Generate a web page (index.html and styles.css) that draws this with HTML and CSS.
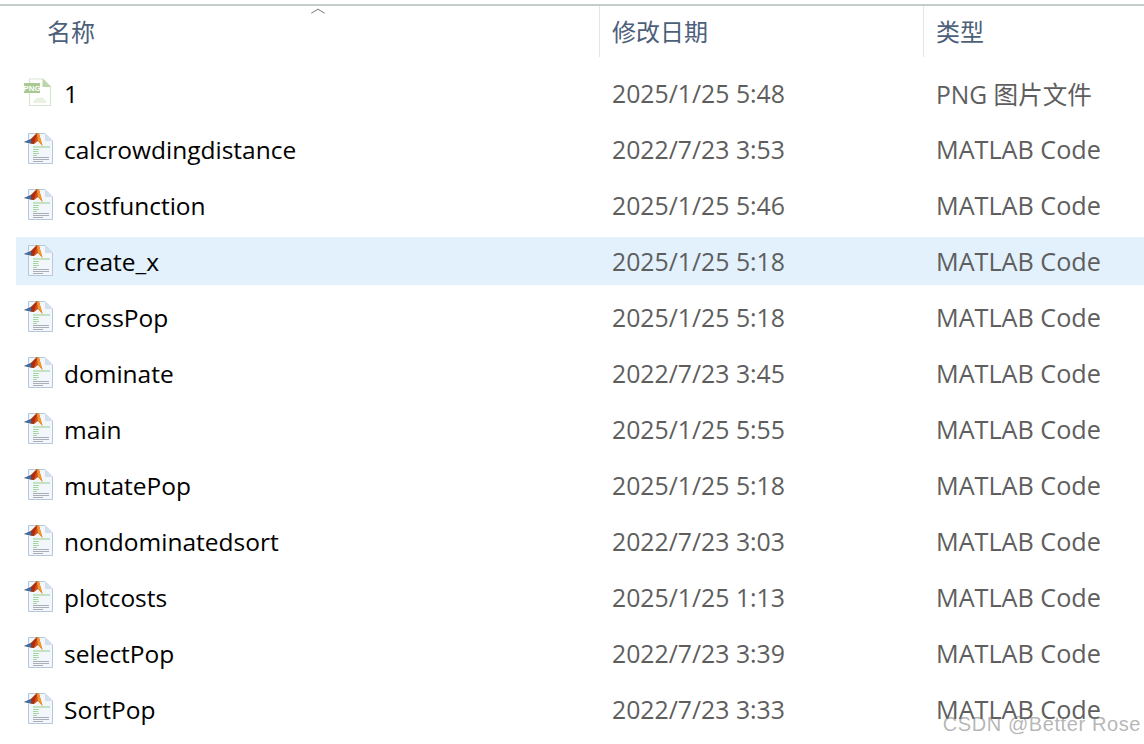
FILE: index.html
```html
<!DOCTYPE html>
<html lang="zh-CN">
<head>
    <meta charset="UTF-8">
    <meta name="viewport" content="width=device-width, initial-scale=1.0">
    <link rel="stylesheet" href="styles.css">
    <title>文件列表</title>
</head>
<body>
    <svg class="icon-defs" width="0" height="0">
        <symbol id="icon-matlab" viewBox="0 0 30 34">
            <path d="M4.500 1.500H21L28.500 9V31.500H4.500Z" fill="#f3f6fa" stroke="#b6c7da" stroke-width="1"/>
            <path d="M21 1.500V9H28.500Z" fill="#d3deec"/>
            <path d="M9 15H26" stroke="#8fd08c" stroke-width="1"/>
            <path d="M9 17.500H15M9 19.500H14M9 21.500H15M9 23.500H13" stroke="#a4d6a0" stroke-width="1"/>
            <path d="M9 25.500H25M9 27.500H25M9 29.500H19" stroke="#a8aeb6" stroke-width="1"/>
            <path d="M0 10L7 7L13 1L15 1.500L18.500 14L14 9L10 12L7 11.500Z" fill="#d4501a"/>
            <path d="M13 1L15 1.500L18.500 14L14 9Z" fill="#f0982c"/>
            <path d="M0 10L7 7L9 9L7 11.500Z" fill="#2a74b5"/>
            <path d="M7 7L13 1L10 12L7 11.500Z" fill="#a92f14"/>
        </symbol>
    </svg>

    <div class="top-rule"></div>

    <div class="list-head">
        <div class="head-cell head-name">名称<span class="sort-caret"></span></div>
        <div class="head-cell">修改日期</div>
        <div class="head-cell">类型</div>
    </div>

    <div class="file-list">
        <div class="file-row">
            <div class="file-name">
                <svg class="file-icon" viewBox="0 -2 30 34">
                    <path d="M5.500 1H19L26.500 8.500V27.500H5.500Z" fill="#fff" stroke="#d8e6d0" stroke-width="1.200"/>
                    <path d="M18.500 0.500V9H27Z" fill="#bcd5aa"/>
                    <rect x="0" y="5" width="16" height="10" fill="#a9c993"/>
                    <text class="png-label" x="8" y="13">PNG</text>
                    <path d="M9 25C10 21 13 19 15 20C17 18 21 20 23 25Z" fill="#e8f1e2"/>
                </svg>1
            </div>
            <div class="file-date">2025/1/25 5:48</div>
            <div class="file-type type-png">PNG 图片文件</div>
        </div>
        <div class="file-row">
            <div class="file-name"><svg class="file-icon"><use href="#icon-matlab"/></svg>calcrowdingdistance</div>
            <div class="file-date">2022/7/23 3:53</div>
            <div class="file-type">MATLAB Code</div>
        </div>
        <div class="file-row">
            <div class="file-name"><svg class="file-icon"><use href="#icon-matlab"/></svg>costfunction</div>
            <div class="file-date">2025/1/25 5:46</div>
            <div class="file-type">MATLAB Code</div>
        </div>
        <div class="file-row selected">
            <div class="file-name"><svg class="file-icon"><use href="#icon-matlab"/></svg>create_x</div>
            <div class="file-date">2025/1/25 5:18</div>
            <div class="file-type">MATLAB Code</div>
        </div>
        <div class="file-row">
            <div class="file-name"><svg class="file-icon"><use href="#icon-matlab"/></svg>crossPop</div>
            <div class="file-date">2025/1/25 5:18</div>
            <div class="file-type">MATLAB Code</div>
        </div>
        <div class="file-row">
            <div class="file-name"><svg class="file-icon"><use href="#icon-matlab"/></svg>dominate</div>
            <div class="file-date">2022/7/23 3:45</div>
            <div class="file-type">MATLAB Code</div>
        </div>
        <div class="file-row">
            <div class="file-name"><svg class="file-icon"><use href="#icon-matlab"/></svg>main</div>
            <div class="file-date">2025/1/25 5:55</div>
            <div class="file-type">MATLAB Code</div>
        </div>
        <div class="file-row">
            <div class="file-name"><svg class="file-icon"><use href="#icon-matlab"/></svg>mutatePop</div>
            <div class="file-date">2025/1/25 5:18</div>
            <div class="file-type">MATLAB Code</div>
        </div>
        <div class="file-row">
            <div class="file-name"><svg class="file-icon"><use href="#icon-matlab"/></svg>nondominatedsort</div>
            <div class="file-date">2022/7/23 3:03</div>
            <div class="file-type">MATLAB Code</div>
        </div>
        <div class="file-row">
            <div class="file-name"><svg class="file-icon"><use href="#icon-matlab"/></svg>plotcosts</div>
            <div class="file-date">2025/1/25 1:13</div>
            <div class="file-type">MATLAB Code</div>
        </div>
        <div class="file-row">
            <div class="file-name"><svg class="file-icon"><use href="#icon-matlab"/></svg>selectPop</div>
            <div class="file-date">2022/7/23 3:39</div>
            <div class="file-type">MATLAB Code</div>
        </div>
        <div class="file-row">
            <div class="file-name"><svg class="file-icon"><use href="#icon-matlab"/></svg>SortPop</div>
            <div class="file-date">2022/7/23 3:33</div>
            <div class="file-type">MATLAB Code</div>
        </div>
    </div>

    <div class="watermark">CSDN @Better Rose</div>
</body>
</html>
```

FILE: styles.css
```css
html, body {
    margin: 0;
    height: 100%;
}

body {
    position: relative;
    overflow: hidden;
    background: #fff;
    font-family: "Open Sans", "Noto Sans CJK SC", sans-serif;
    font-size: 24px;
}

.icon-defs {
    position: absolute;
}

.png-label {
    fill: #fff;
    font-family: "Liberation Sans", sans-serif;
    font-size: 8px;
    font-weight: bold;
    text-anchor: middle;
}

.top-rule {
    height: 2px;
    margin-top: 4px;
    background: #c4cdca;
}

.list-head {
    display: grid;
    grid-template-columns: 584px 324px 1fr;
    height: 51px;
    margin-left: 16px;
}

.head-cell {
    position: relative;
    display: flex;
    align-items: center;
    padding-left: 12px;
    padding-bottom: 3px;
    border-right: 1px solid #e5e5e5;
    color: #4c607a;
    font-family: "Noto Sans CJK SC", sans-serif;
}

.head-cell:last-child {
    border-right: none;
}

.head-name {
    padding-left: 31px;
}

.sort-caret {
    position: absolute;
    top: 2px;
    left: 297px;
    width: 9px;
    height: 9px;
    border-top: 1px solid #6d6d6d;
    border-left: 1px solid #6d6d6d;
    transform: scaleY(0.6) rotate(45deg);
}

.file-list {
    display: flex;
    flex-direction: column;
    gap: 8px;
    margin: 12px 0 0 16px;
}

.file-row {
    display: grid;
    grid-template-columns: 584px 324px 1fr;
    align-items: center;
    height: 48px;
}

.selected {
    background: #e2f1fc;
}

.file-name {
    display: flex;
    align-items: center;
    gap: 10px;
    padding-left: 8px;
    color: #000;
    font-size: 24.5px;
}

.file-icon {
    width: 30px;
    height: 34px;
    flex-shrink: 0;
}

.file-date,
.file-type {
    padding-left: 12px;
    color: #5e5e5e;
}

.file-date {
    font-size: 24.8px;
}

.file-type {
    font-size: 25.2px;
}

.type-png {
    font-size: 24.6px;
}

.watermark {
    position: absolute;
    top: 713px;
    right: 3px;
    color: rgba(120, 120, 120, 0.55);
    font-family: "Liberation Sans", sans-serif;
    font-size: 20px;
    letter-spacing: 0.6px;
}
```
